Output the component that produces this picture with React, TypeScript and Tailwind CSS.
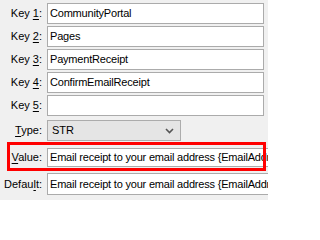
import React from "react";

const font = { fontFamily: '"Liberation Sans", Arial, sans-serif' };

function Label({ pre, acc, post, className = "" }: { pre: string; acc: string; post: string; className?: string }) {
  return (
    <div className={`w-[42px] shrink-0 text-right text-[11px] text-black whitespace-nowrap ${className}`}>
      {pre}
      <span className="underline underline-offset-[2px]">{acc}</span>
      {post}
    </div>
  );
}

function TextRow({ label, value, h = "h-[21px]" }: { label: [string, string, string]; value: string; h?: string }) {
  return (
    <div className="flex items-center gap-[5px]">
      <Label pre={label[0]} acc={label[1]} post={label[2]} />
      <div className={`${h} w-[217px] shrink-0 border border-[#ababab] bg-white flex items-center px-[2px] text-[11px] tracking-[-0.2px] text-black whitespace-nowrap overflow-hidden`}>
        {value}
      </div>
    </div>
  );
}

export default function App() {
  return (
    <div className="w-[268px] h-[200px] bg-[#f0f0f0] overflow-hidden" style={font}>
      <div className="flex flex-col pt-[3px]">
        <div className="flex flex-col gap-[2px]">
          <TextRow label={["Key ", "1", ":"]} value="CommunityPortal" />
          <TextRow label={["Key ", "2", ":"]} value="Pages" />
          <TextRow label={["Key ", "3", ":"]} value="PaymentReceipt" />
          <TextRow label={["Key ", "4", ":"]} value="ConfirmEmailReceipt" />
          <TextRow label={["Key ", "5", ":"]} value="" />
        </div>
        <div className="flex items-center gap-[5px] mt-[4px]">
          <Label pre="" acc="T" post="ype:" />
          <div className="h-[21px] w-[134px] shrink-0 border border-[#acacac] bg-[#e5e5e5] flex items-center justify-between pl-[4px] pr-[6px] text-[11px] text-black">
            <span>STR</span>
            <svg width="9" height="6" viewBox="0 0 9 6" className="mt-[1px]">
              <path d="M1 1 L4.5 4.5 L8 1" stroke="#555" strokeWidth="1.6" fill="none" />
            </svg>
          </div>
        </div>
        <div className="relative mt-[7px] w-[268px]">
          <div className="flex items-center gap-[5px]">
            <Label pre="" acc="V" post="alue:" />
            <div className="h-[19px] w-[240px] shrink-0 border border-[#ababab] bg-white flex items-center px-[2px] text-[11px] tracking-[-0.2px] text-black whitespace-nowrap overflow-hidden">
              Email receipt to your email address {"{"}EmailAddress{"}"}
            </div>
          </div>
          <div className="absolute left-[7px] top-[-6px] w-[259px] h-[29px] border-[3px] border-[#ff0000] pointer-events-none" />
        </div>
        <div className="flex items-center gap-[5px] mt-[6px]">
          <Label pre="Defau" acc="l" post="t:" />
          <div className="h-[22px] w-[240px] shrink-0 border border-[#ababab] bg-white flex items-center px-[2px] text-[11px] tracking-[-0.2px] text-black whitespace-nowrap overflow-hidden">
            Email receipt to your email address {"{"}EmailAddress{"}"}
          </div>
        </div>
      </div>
    </div>
  );
}
